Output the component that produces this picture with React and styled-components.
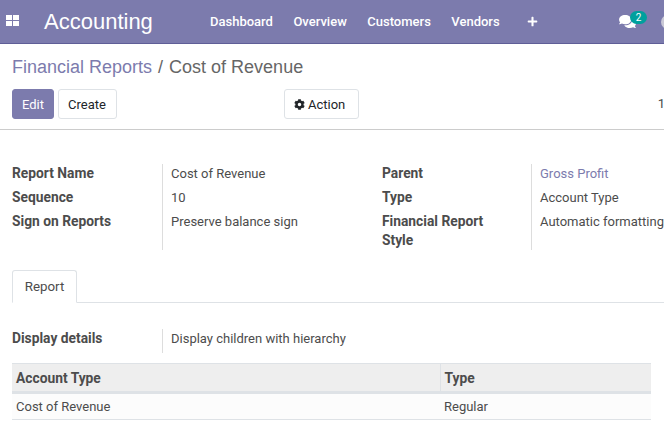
import React from "react";
import styled, { createGlobalStyle } from "styled-components";
import { FaComments, FaCog, FaPlus } from "react-icons/fa";

const Global = createGlobalStyle`
  html, body { margin: 0; padding: 0; background: #fff; }
  body { width: 664px; height: 428px; overflow: hidden; font-family: Roboto, "Liberation Sans", sans-serif; font-size: 13px; color: #4c4c4c; }
  * { box-sizing: border-box; }
`;

const Page = styled.div`width: 664px; height: 428px; overflow: hidden; display: flex; flex-direction: column;`;

const Navbar = styled.header`
  height: 44px; flex: none; display: flex; align-items: center;
  background: #7c7bad; border-bottom: 1px solid #5f5e97; color: #fff;
`;
const AppsIcon = styled.svg`width: 13px; height: 11px; margin-left: 6px; margin-top: -2px; flex: none;`;
const Brand = styled.div`
  margin-left: 25px; width: 166px; font-family: "Liberation Sans", sans-serif; font-size: 22px; line-height: 40px; flex: none;
`;
const Menu = styled.nav`display: flex; align-items: center; gap: 20.5px; font-size: 13px; font-weight: 500; flex: none;`;
const PlusIcon = styled(FaPlus)`width: 11px; height: 11px; margin-left: 7px; flex: none;`;
const Systray = styled.div`position: relative; margin-left: 81px; display: flex; align-items: center; flex: none;`;
const ChatIcon = styled(FaComments)`width: 17px; height: 15px;`;
const Badge = styled.span`
  position: absolute; left: 11px; top: -3px; width: 17px; height: 13px; border-radius: 7px;
  background: #00a09d; color: #fff; font-size: 10px; line-height: 13px; text-align: center;
`;
const Avatar = styled.span`
  width: 14px; height: 14px; margin-left: 25px; border-radius: 50%; background: #c9c8d6; flex: none;
`;

const ControlPanel = styled.section`
  height: 86px; flex: none; border-bottom: 1px solid #ccc; padding: 13px 12px 0; color: #666;
`;
const Breadcrumb = styled.div`font-size: 18px; line-height: 21px; display: flex; gap: 6px; font-family: "Liberation Sans", sans-serif;`;
const CrumbLink = styled.span`color: #7c7bad;`;
const Actions = styled.div`display: flex; margin-top: 11px; position: relative;`;
const Button = styled.button`
  height: 30px; width: ${p => p.$w}; padding: 0 9px; border-radius: 3px; font: 13px Roboto, sans-serif;
  display: flex; align-items: center; justify-content: flex-start; gap: 3px; cursor: pointer;
  background: ${p => (p.$primary ? "#7c7bad" : "#fff")};
  color: ${p => (p.$primary ? "#fff" : "#212529")};
  border: 1px solid ${p => (p.$primary ? "#7c7bad" : "#dee2e6")};
  margin-left: ${p => p.$ml || "0"};
`;
const Pager = styled.span`margin-left: auto; margin-right: -13px; color: #4c4c4c; line-height: 30px; font-size: 13px;`;

const Sheet = styled.main`padding: 0 12px; flex: 1;`;
const Group = styled.div`
  display: grid; grid-template-columns: 150px 220px 149px 1fr; margin-top: 34px; width: 700px;
`;
const Column = styled.div`
  display: grid; grid-template-columns: subgrid; grid-template-rows: 24px 24px 38px; grid-column: span 2;
`;
const Label = styled.div`
  font-weight: 700; color: #4c4c4c; padding-right: 30px; line-height: 19px; font-size: 13.8px;
`;
const Value = styled.div`
  border-left: 1px solid #ddd; padding-left: 8px; line-height: 19px; font-size: 13px; color: #4c4c4c;
`;
const ValueLink = styled.span`color: #7c7bad;`;

const Tabs = styled.div`
  margin: 20px -12px 0 0; height: 33px; border-bottom: 1px solid #dee2e6; display: flex;
`;
const Tab = styled.div`
  width: 65px; height: 33px; background: #fff; border: 1px solid #dee2e6; border-bottom-color: #fff;
  border-radius: 3px 3px 0 0; text-align: center; line-height: 31px; font-size: 13.33px;
`;
const DetailRow = styled.div`display: flex; margin-top: 26px; height: 24px;`;
const DetailLabel = styled.div`width: 150px; font-weight: 700; font-size: 13.8px; line-height: 19px;`;
const DetailValue = styled.div`border-left: 1px solid #ddd; padding-left: 8px; line-height: 19px; font-size: 13px;`;

const Table = styled.table`
  margin-top: 10px; width: 639px; border-collapse: collapse; table-layout: fixed; font-size: 13px;
`;
const Th = styled.th`
  height: 29px; padding: 0 4px; background: #eee; text-align: left; font-size: 13.8px; font-weight: 700; color: #4c4c4c;
  border-top: 1px solid #dee2e6; border-bottom: 3px solid #dee2e6; border-left: ${p => (p.$first ? "0" : "1px solid #dee2e6")};
  width: ${p => p.$w || "auto"};
`;
const Td = styled.td`
  height: 27px; padding: 0 4px; background: #fcfcfc; border-bottom: 1px solid #dee2e6;
`;

export default function App() {
  return (
    <Page>
      <Global />
      <Navbar>
        <AppsIcon viewBox="0 0 13 11" fill="#fff">
          <rect x="0" y="0" width="6" height="5" /><rect x="7" y="0" width="6" height="5" />
          <rect x="0" y="6" width="6" height="5" /><rect x="7" y="6" width="6" height="5" />
        </AppsIcon>
        <Brand>Accounting</Brand>
        <Menu>
          <span>Dashboard</span><span>Overview</span><span>Customers</span><span>Vendors</span><PlusIcon />
        </Menu>
        <Systray>
          <ChatIcon /><Badge>2</Badge><Avatar />
        </Systray>
      </Navbar>
      <ControlPanel>
        <Breadcrumb><CrumbLink>Financial Reports</CrumbLink><span>/</span><span>Cost of Revenue</span></Breadcrumb>
        <Actions>
          <Button $primary $w="42px">Edit</Button>
          <Button $ml="4px" $w="59px">Create</Button>
          <Button $ml="167px" $w="75px"><FaCog size={11} />Action</Button>
          <Pager>1</Pager>
        </Actions>
      </ControlPanel>
      <Sheet>
        <Group>
          <Column>
            <Label>Report Name</Label><Value>Cost of Revenue</Value>
            <Label>Sequence</Label><Value>10</Value>
            <Label>Sign on Reports</Label><Value>Preserve balance sign</Value>
          </Column>
          <Column>
            <Label>Parent</Label><Value><ValueLink>Gross Profit</ValueLink></Value>
            <Label>Type</Label><Value>Account Type</Value>
            <Label>Financial Report Style</Label><Value>Automatic formatting</Value>
          </Column>
        </Group>
        <Tabs><Tab>Report</Tab></Tabs>
        <DetailRow><DetailLabel>Display details</DetailLabel><DetailValue>Display children with hierarchy</DetailValue></DetailRow>
        <Table>
          <thead><tr><Th $first $w="428px">Account Type</Th><Th>Type</Th></tr></thead>
          <tbody><tr><Td>Cost of Revenue</Td><Td>Regular</Td></tr></tbody>
        </Table>
      </Sheet>
    </Page>
  );
}
